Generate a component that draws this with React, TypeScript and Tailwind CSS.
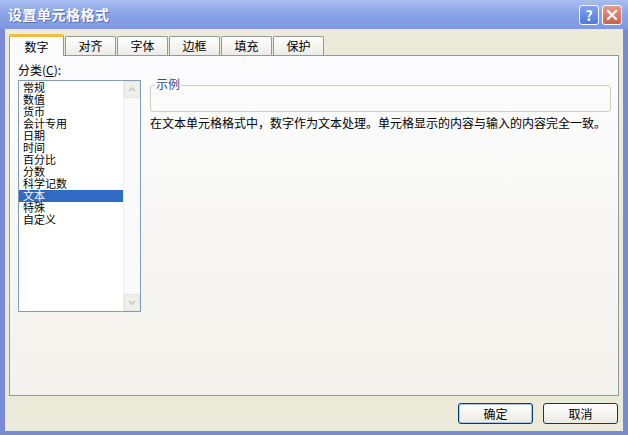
import React from 'react';

const tabs = ['数字', '对齐', '字体', '边框', '填充', '保护'];
const categories = ['常规', '数值', '货币', '会计专用', '日期', '时间', '百分比', '分数', '科学记数', '文本', '特殊', '自定义'];

const font = { fontFamily: '"Noto Sans CJK SC", "Liberation Sans", sans-serif' };

export default function App() {
  return (
    <div className="w-[628px] h-[435px] bg-[#7a8ad6] flex flex-col overflow-hidden" style={font}>
      {/* title bar */}
      <div className="h-[29px] shrink-0 flex items-center justify-between pl-[8px] pr-[6px] bg-gradient-to-b from-[#a9bdf0] via-[#8aa3e6] to-[#7e98e0]">
        <span className="text-white text-[14px] font-bold tracking-[0.5px] [text-shadow:1px_1px_0_#5a6fb8]">设置单元格格式</span>
        <div className="flex gap-[3px]">
          <div className="w-[20px] h-[20px] rounded-[3px] border border-white bg-gradient-to-b from-[#7fa4f0] to-[#4f7ad8] flex items-center justify-center text-white text-[14px] font-bold leading-none">?</div>
          <div className="w-[20px] h-[20px] rounded-[3px] border border-white bg-gradient-to-b from-[#e79a8a] to-[#c9604e] flex items-center justify-center">
            <svg width="12" height="12" viewBox="0 0 12 12"><path d="M2 2L10 10M10 2L2 10" stroke="white" strokeWidth="2.2" strokeLinecap="round" /></svg>
          </div>
        </div>
      </div>

      {/* client */}
      <div className="flex-1 mx-[5px] mb-[4px] bg-[#ecead8] flex flex-col px-[4px] pt-[6px]">
        {/* tabs */}
        <div className="flex items-end h-[20px]">
          {tabs.map((t, i) =>
            i === 0 ? (
              <div key={t} className="relative z-10 w-[55px] h-[22px] -mb-[1px] bg-[#fcfcfe] border border-[#919b9c] border-b-0 border-t-[3px] border-t-[#f5b84a] rounded-t-[2px] flex items-center justify-center text-[12px] text-black">
                {t}
              </div>
            ) : (
              <div key={t} className="w-[51px] h-[19px] ml-[1px] bg-gradient-to-b from-[#fefefe] to-[#ecebe6] border border-[#919b9c] border-b-0 rounded-t-[2px] flex items-center justify-center text-[12px] text-black">
                {t}
              </div>
            )
          )}
        </div>

        {/* panel */}
        <div className="h-[341px] border border-[#919b9c] bg-gradient-to-b from-[#fcfcfe] to-[#f3f2ec] flex gap-[9px] pl-[8px] pt-[6px]">
          <div className="flex flex-col w-[123px]">
            <div className="text-[12px] leading-[16px] text-black">分类(<span className="underline">C</span>):</div>
            <div className="mt-[2px] h-[232px] border border-[#7f9db9] bg-white flex">
              <div className="flex-1 flex flex-col pt-[1px] font-['Liberation_Sans','Noto_Sans_CJK_SC',sans-serif]">
                {categories.map((c) => (
                  <div
                    key={c}
                    className={`h-[12px] leading-[12px] text-[11px] pl-[4px] ${c === '文本' ? 'bg-[#316ac5] text-white' : 'text-black'}`}
                  >
                    {c}
                  </div>
                ))}
              </div>
              <div className="w-[17px] flex flex-col justify-between bg-[#fafaf8] border-l border-[#eeede5]">
                <div className="h-[17px] rounded-[2px] bg-[#eef0ea] border border-[#e4e6de] flex items-center justify-center">
                  <svg width="8" height="5" viewBox="0 0 8 5"><path d="M1 4L4 1L7 4" stroke="#c3c6bd" strokeWidth="1.5" fill="none" /></svg>
                </div>
                <div className="h-[17px] rounded-[2px] bg-[#eef0ea] border border-[#e4e6de] flex items-center justify-center">
                  <svg width="8" height="5" viewBox="0 0 8 5"><path d="M1 1L4 4L7 1" stroke="#c3c6bd" strokeWidth="1.5" fill="none" /></svg>
                </div>
              </div>
            </div>
          </div>

          <div className="flex flex-col pt-[16px] w-[461px]">
            <div className="relative h-[27px] border border-[#d0d0bf] rounded-[3px] mt-[7px]">
              <span className="absolute -top-[10px] left-[4px] bg-[#fcfcfe] px-[1px] text-[12px] leading-[16px] text-[#2a4f8f]">示例</span>
            </div>
            <div className="mt-[3px] text-[12px] leading-[16px] text-black whitespace-nowrap">
              在文本单元格格式中，数字作为文本处理。单元格显示的内容与输入的内容完全一致。
            </div>
          </div>
        </div>

        {/* buttons */}
        <div className="flex justify-end gap-[10px] mt-[7px] pr-[1px]">
          <div className="w-[75px] h-[21px] rounded-[3px] border border-[#003c74] bg-gradient-to-b from-[#ffffff] to-[#eceae0] shadow-[inset_0_0_0_1px_#a9c4f0] flex items-center justify-center text-[12px] text-black">确定</div>
          <div className="w-[75px] h-[21px] rounded-[3px] border border-[#003c74] bg-gradient-to-b from-[#ffffff] to-[#eceae0] flex items-center justify-center text-[12px] text-black">取消</div>
        </div>
      </div>
    </div>
  );
}
